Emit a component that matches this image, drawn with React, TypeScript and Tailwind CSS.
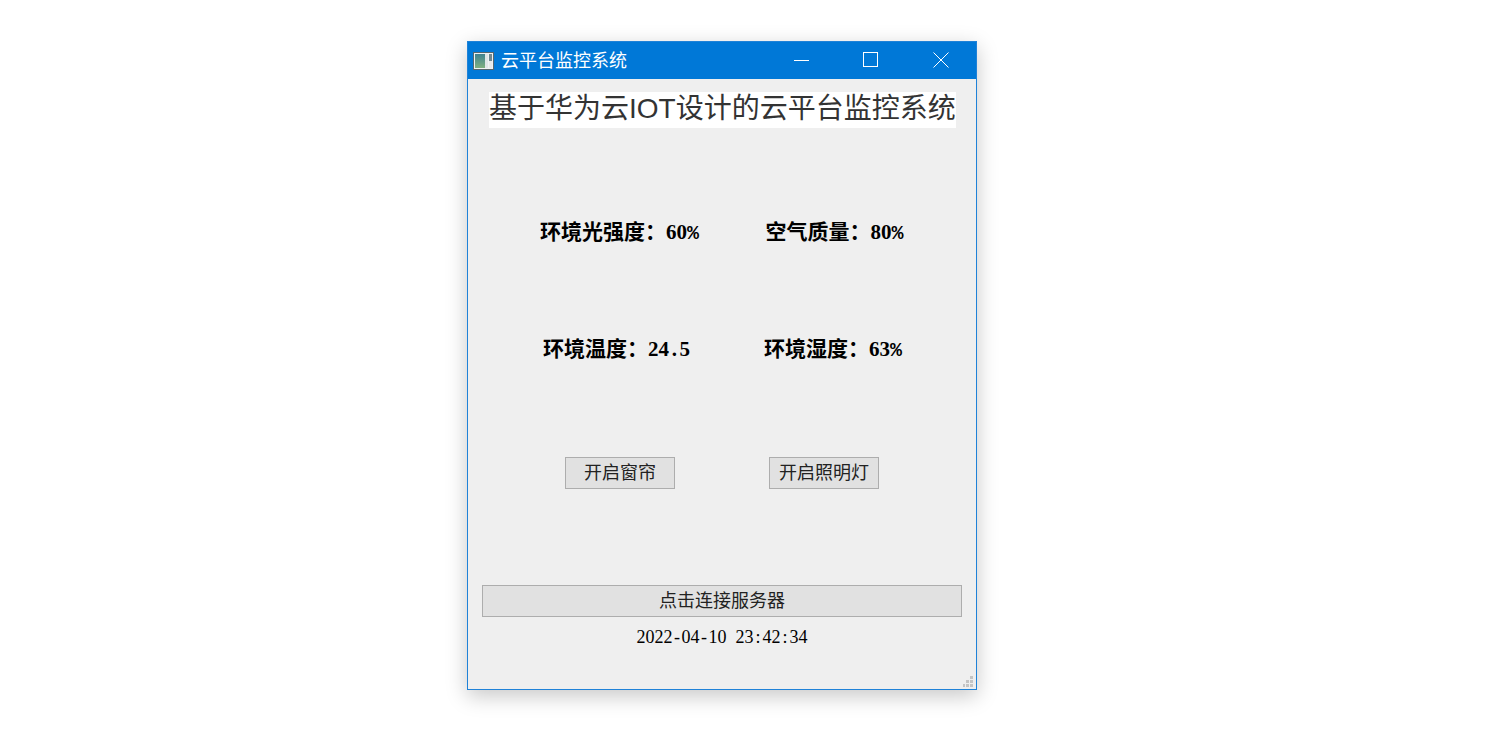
const CJK = "font-['Noto_Sans_CJK_SC','Liberation_Serif',serif]";
const SERIF = "font-['Liberation_Serif',serif]";
const MONO = "font-['Liberation_Mono',monospace]";

function AppIcon() {
  return (
    <svg width="21" height="18" viewBox="0 0 21 18" className="shrink-0">
      <defs>
        <linearGradient id="pane" x1="0" y1="0" x2="0" y2="1">
          <stop offset="0" stopColor="#3f8290" />
          <stop offset="1" stopColor="#7fb080" />
        </linearGradient>
      </defs>
      <rect x="0.5" y="0.5" width="20" height="17" fill="#eef1f3" stroke="#56666e" />
      <rect x="2" y="2" width="10" height="14" fill="url(#pane)" />
      <rect x="12" y="2" width="3" height="14" fill="#dfe5e7" />
      <rect x="16" y="2" width="3" height="7" fill="#6f8790" />
      <rect x="16" y="9" width="3" height="7" fill="#e6e9ea" />
    </svg>
  );
}

// Latin in the reference sits on a half-width grid, so each character gets its own cell
function Cells({ text, className }: { text: string; className: string }) {
  return (
    <>
      {text.split("").map((c, i) => (
        <span key={i} className={`inline-block text-center ${c === "%" ? `${MONO} text-[20px]` : SERIF} ${className}`}>
          {c === " " ? "\u00a0" : c}
        </span>
      ))}
    </>
  );
}

function Reading({ label, value, className }: { label: string; value: string; className: string }) {
  return (
    <div className={`h-6 text-[21px] leading-6 font-bold whitespace-pre text-black ${className}`}>
      <span className={CJK}>{label}</span>
      <Cells text={value} className="w-[10.5px]" />
    </div>
  );
}

function Button({ children, className }: { children: string; className: string }) {
  return (
    <button
      type="button"
      className={`h-[32px] border border-[#adadad] bg-[#e1e1e1] pb-[4px] text-[18px] leading-[24px] text-[#222] ${CJK} ${className}`}
    >
      {children}
    </button>
  );
}

export default function App() {
  return (
    <div className="h-[748px] w-[1508px] bg-white pt-[41px] pl-[467px]">
      <div className="flex h-[649px] w-[510px] flex-col border border-[#1f82d8] bg-[#efefef] shadow-[0_6px_20px_rgba(0,0,0,0.22)]">
        <header className="flex h-[37px] items-center bg-[#0078d7] pl-[5px] text-white">
          <AppIcon />
          <span className="mt-[2px] ml-[7px] font-['Liberation_Sans','Noto_Sans_CJK_SC',sans-serif] text-[18px]">云平台监控系统</span>
          <div className="ml-auto flex items-center">
            <svg width="16" height="16" viewBox="0 0 16 16" className="mr-[53px] -mt-[1px]" stroke="#fff" fill="none">
              <path d="M0 8.5h15" />
            </svg>
            <svg width="16" height="16" viewBox="0 0 16 16" className="mr-[54px] -mt-[1px]" stroke="#fff" fill="none">
              <rect x="0.5" y="0.5" width="14" height="14" />
            </svg>
            <svg width="16" height="16" viewBox="0 0 16 16" className="mr-[27px] -mt-[1px]" stroke="#fff" fill="none">
              <path d="M0.5 0.5l15 15M15.5 0.5l-15 15" />
            </svg>
          </div>
        </header>

        <div className="relative flex flex-1 flex-col">
          <h1 className="mt-[13px] ml-[21px] h-[36px] self-start bg-white font-['Noto_Sans_CJK_SC','Liberation_Sans',sans-serif] text-[28px] leading-[28px] font-normal whitespace-nowrap text-[#333]">
            基于华为云<span className="font-['Liberation_Sans',sans-serif]">IOT</span>设计的云平台监控系统
          </h1>

          <div className="mt-[90px] flex">
            <Reading className="ml-[72px]" label="环境光强度：" value="60%" />
            <Reading className="ml-[68px]" label="空气质量：" value="80%" />
          </div>
          <div className="mt-[93px] flex">
            <Reading className="ml-[75px]" label="环境温度：" value="24.5" />
            <Reading className="ml-[74px]" label="环境湿度：" value="63%" />
          </div>

          <div className="mt-[98px] flex">
            <Button className="ml-[97px] w-[110px]">开启窗帘</Button>
            <Button className="ml-[94px] w-[110px]">开启照明灯</Button>
          </div>

          <Button className="mx-[14px] mt-[96px] w-[480px]">点击连接服务器</Button>

          <div className="mt-[9px] h-5 text-center text-[18px] leading-5 whitespace-pre text-black">
            <Cells text="2022-04-10 23:42:34" className="w-[9px]" />
          </div>

          <svg width="10" height="11" viewBox="0 0 10 11" className="absolute right-[3px] bottom-[2px]" fill="#c4c4c4">
            <rect x="7" y="0" width="3" height="3" />
            <rect x="3" y="4" width="3" height="3" />
            <rect x="7" y="4" width="3" height="3" />
            <rect x="0" y="8" width="2" height="3" />
            <rect x="3" y="8" width="3" height="3" />
            <rect x="7" y="8" width="3" height="3" />
          </svg>
        </div>
      </div>
    </div>
  );
}
